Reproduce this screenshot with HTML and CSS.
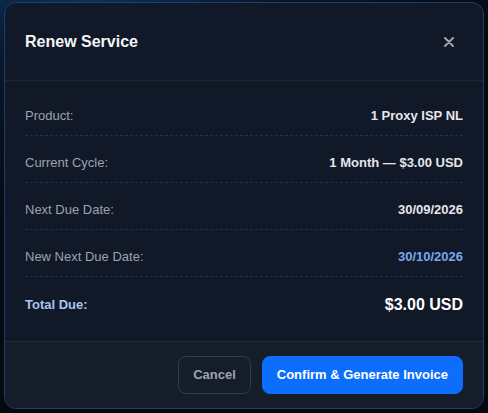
FILE: index.html
```html
<!DOCTYPE html>
<html lang="en">
<head>
  <meta charset="UTF-8" /><meta name="viewport" content="width=device-width, initial-scale=1.0" />
  <title>Renew Service</title>
  <link rel="stylesheet" href="styles.css">
</head>
<body>
  <div class="modal">
    <div class="modal-header">
      <h2>Renew Service</h2>
      <button class="close-btn" aria-label="Close">
        <svg width="10" height="10" viewBox="0 0 10 10"><path d="M1 1L9 9M9 1L1 9" stroke="currentColor" stroke-width="2" stroke-linecap="round"/></svg>
      </button>
    </div>

    <div class="modal-body">
      <div class="row"><span class="label">Product:</span><span class="value">1 Proxy ISP NL</span></div>
      <div class="row"><span class="label">Current Cycle:</span><span class="value">1 Month — $3.00 USD</span></div>
      <div class="row"><span class="label">Next Due Date:</span><span class="value">30/09/2026</span></div>
      <div class="row"><span class="label">New Next Due Date:</span><span class="value highlight">30/10/2026</span></div>
      <div class="row total"><span class="label">Total Due:</span><span class="value">$3.00 USD</span></div>
    </div>

    <div class="modal-footer">
      <button class="btn btn-cancel">Cancel</button>
      <button class="btn btn-primary">Confirm &amp; Generate Invoice</button>
    </div>
  </div>
</body>
</html>
```

FILE: styles.css
```css
html, body { height: 100%; }
body { margin: 0; font-family: "Liberation Sans", Arial, sans-serif; background: radial-gradient(ellipse 420px 260px at 90px -20px, #0e3a68 0%, #0b1a30 45%, #080c14 100%); background-color: #080c14; display: flex; justify-content: center; align-items: flex-start; }
.modal { width: 480px; margin-top: 2px; box-sizing: border-box; background: #111827; border: 1px solid #1c3f6e; border-radius: 12px; overflow: hidden; box-shadow: 0 10px 30px rgba(0,0,0,0.5); }

.modal-header { display: flex; justify-content: space-between; align-items: center; padding: 24px 20px; border-bottom: 1px solid #1f2733; }
.modal-header h2 { margin: 0; font-size: 16px; line-height: 29px; font-weight: bold; color: #f3f4f6; }
.close-btn { width: 28px; height: 29px; padding: 0; border: none; background: transparent; color: #9ca3af; cursor: pointer; display: flex; align-items: center; justify-content: center; }

.modal-body { padding: 16px 20px 15px; }
.row { display: flex; justify-content: space-between; align-items: center; padding: 10px 0; margin-bottom: 8px; border-bottom: 1px dashed #263041; font-size: 13px; line-height: 18px; }
.row .label { color: #9ca3af; }
.row .value { color: #e5e7eb; font-weight: bold; }
.row .value.highlight { color: #7aa7f0; }
.row.total { border-bottom: none; margin-bottom: 0; padding: 9px 0 10px; line-height: 22px; }
.row.total .label { color: #a9c4f2; font-weight: bold; }
.row.total .value { color: #ffffff; font-size: 16px; }

.modal-footer { display: flex; justify-content: flex-end; gap: 11px; padding: 14px 20px; background: #161d2a; border-top: 1px solid #242c3a; }
.btn { font-family: inherit; font-size: 13px; font-weight: bold; line-height: 16px; padding: 10px 14px; border-radius: 8px; cursor: pointer; }
.btn-cancel { background: transparent; border: 1px solid #323b4a; color: #9ca3af; }
.btn-primary { background: #0d6efd; border: 1px solid #0d6efd; color: #ffffff; }
.btn-primary:hover { background: #0b5ed7; }
```
